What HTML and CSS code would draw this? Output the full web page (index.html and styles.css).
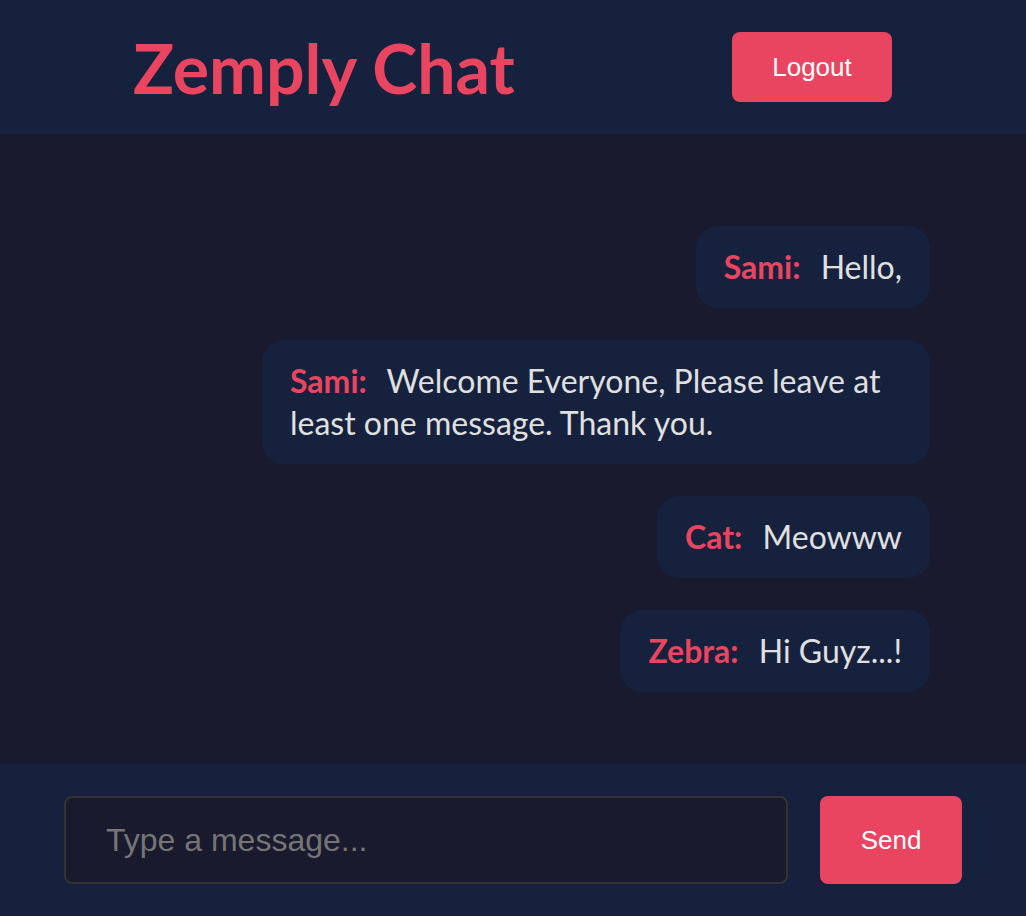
FILE: index.html
```html
<!DOCTYPE html>
<html lang="en">
<head>
<meta charset="UTF-8">
<meta name="viewport" content="width=device-width, initial-scale=1.0">
<title>Zemply Chat</title>
<link rel="stylesheet" href="styles.css">
</head>
<body>
  <header class="header">
    <h1 class="title">Zemply Chat</h1>
    <button class="btn btn-logout" type="button">Logout</button>
  </header>

  <main class="chat" id="chat">
    <div class="message">
      <span class="message-user">Sami:</span>
      <span class="message-text">Hello,</span>
    </div>
    <div class="message">
      <span class="message-user">Sami:</span>
      <span class="message-text">Welcome Everyone, Please leave at least one message. Thank you.</span>
    </div>
    <div class="message">
      <span class="message-user">Cat:</span>
      <span class="message-text">Meowww</span>
    </div>
    <div class="message">
      <span class="message-user">Zebra:</span>
      <span class="message-text">Hi Guyz...!</span>
    </div>
  </main>

  <form class="composer" id="composer">
    <input class="composer-input" type="text" placeholder="Type a message...">
    <button class="btn btn-send" type="submit">Send</button>
  </form>
</body>
</html>
```

FILE: styles.css
```css
* {
  box-sizing: border-box;
}

body {
  margin: 0;
  padding: 0;
  background-color: #1a1a2e;
  color: #e0e0e0;
  font-family: Lato, "Open Sans", sans-serif;
}

.header {
  height: 134px;
  display: flex;
  justify-content: space-between;
  align-items: center;
  padding: 0 134px 0 133px;
  background-color: #16213e;
}

.title {
  margin: 0;
  color: #e94560;
  font-size: 68px;
  font-weight: bold;
}

.btn {
  background-color: #e94560;
  color: #fff;
  border: none;
  border-radius: 8px;
  font-family: "Liberation Sans", Arial, sans-serif;
  font-size: 26px;
  cursor: pointer;
}

.btn-logout {
  width: 160px;
  height: 70px;
}

.chat {
  display: flex;
  flex-direction: column;
  align-items: flex-end;
  gap: 32px;
  padding: 92px 96px 72px;
}

.message {
  max-width: 668px;
  padding: 20px 28px;
  background-color: #16213e;
  border-radius: 22px;
  font-size: 32px;
  line-height: 42px;
}

.message-user {
  color: #e94560;
  font-weight: bold;
  margin-right: 12px;
}

.composer {
  display: flex;
  gap: 32px;
  padding: 32px 64px;
  background-color: #16213e;
}

.composer-input {
  flex: 1;
  height: 88px;
  padding: 0 40px;
  background-color: #1a1a2e;
  color: #e0e0e0;
  border: 2px solid #333;
  border-radius: 8px;
  font-family: "Liberation Sans", Arial, sans-serif;
  font-size: 32px;
}

.composer-input::placeholder {
  color: #757575;
}

.btn-send {
  width: 142px;
  height: 88px;
}
```
